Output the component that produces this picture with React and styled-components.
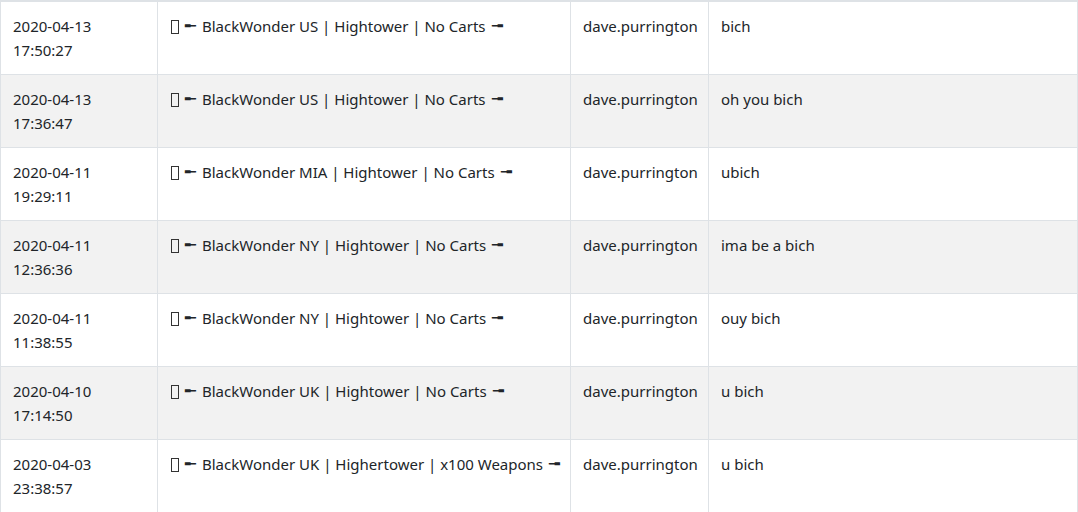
import React from 'react';
import styled, { createGlobalStyle } from 'styled-components';

const GlobalStyle = createGlobalStyle`
  body {
    margin: 0;
    background: #ffffff;
    font-family: 'Noto Sans', 'Open Sans', sans-serif;
    color: #212529;
  }
`;

const Table = styled.table`
  width: 100%;
  table-layout: fixed;
  border-collapse: collapse;
  font-size: 15px;
  line-height: 24px;
  color: #212529;
`;

const Col = styled.col`
  width: ${p => p.$w || 'auto'};
`;

const Row = styled.tr`
  background: ${p => (p.$striped ? '#f2f2f2' : '#ffffff')};
  &:first-child td {
    border-top-width: 2px;
  }
`;

const Cell = styled.td`
  border: 1px solid #dee2e6;
  padding: 12px;
  vertical-align: top;
  white-space: ${p => (p.$nowrap ? 'nowrap' : 'normal')};
  overflow: hidden;
`;

const Tofu = styled.span`
  display: inline-block;
  width: 8px;
  height: 14px;
  margin-left: 1px;
  border: 1px solid #333;
  box-sizing: border-box;
  vertical-align: -2px;
`;

const Tack = styled.span`
  display: inline-block;
  font-size: 18px;
  line-height: 20px;
  margin: 0 6px;
`;

const rows = [
  ['2020-04-13', '17:50:27', 'BlackWonder US | Hightower | No Carts', 'bich'],
  ['2020-04-13', '17:36:47', 'BlackWonder US | Hightower | No Carts', 'oh you bich'],
  ['2020-04-11', '19:29:11', 'BlackWonder MIA | Hightower | No Carts', 'ubich'],
  ['2020-04-11', '12:36:36', 'BlackWonder NY | Hightower | No Carts', 'ima be a bich'],
  ['2020-04-11', '11:38:55', 'BlackWonder NY | Hightower | No Carts', 'ouy bich'],
  ['2020-04-10', '17:14:50', 'BlackWonder UK | Hightower | No Carts', 'u bich'],
  ['2020-04-03', '23:38:57', 'BlackWonder UK | Highertower | x100 Weapons', 'u bich'],
];

export default function App() {
  return (
    <>
      <GlobalStyle />
      <Table>
        <colgroup>
          <Col $w='157px' />
          <Col $w='413px' />
          <Col $w='138px' />
          <Col />
        </colgroup>
        <tbody>
          {rows.map(([date, time, server, msg], i) => (
            <Row key={i} $striped={i % 2 === 1}>
              <Cell>
                {date}
                <br />
                {time}
              </Cell>
              <Cell $nowrap>
                <Tofu />
                <Tack>╾</Tack>
                {server}
                <Tack>╼</Tack>
              </Cell>
              <Cell>dave.purrington</Cell>
              <Cell>{msg}</Cell>
            </Row>
          ))}
        </tbody>
      </Table>
    </>
  );
}
